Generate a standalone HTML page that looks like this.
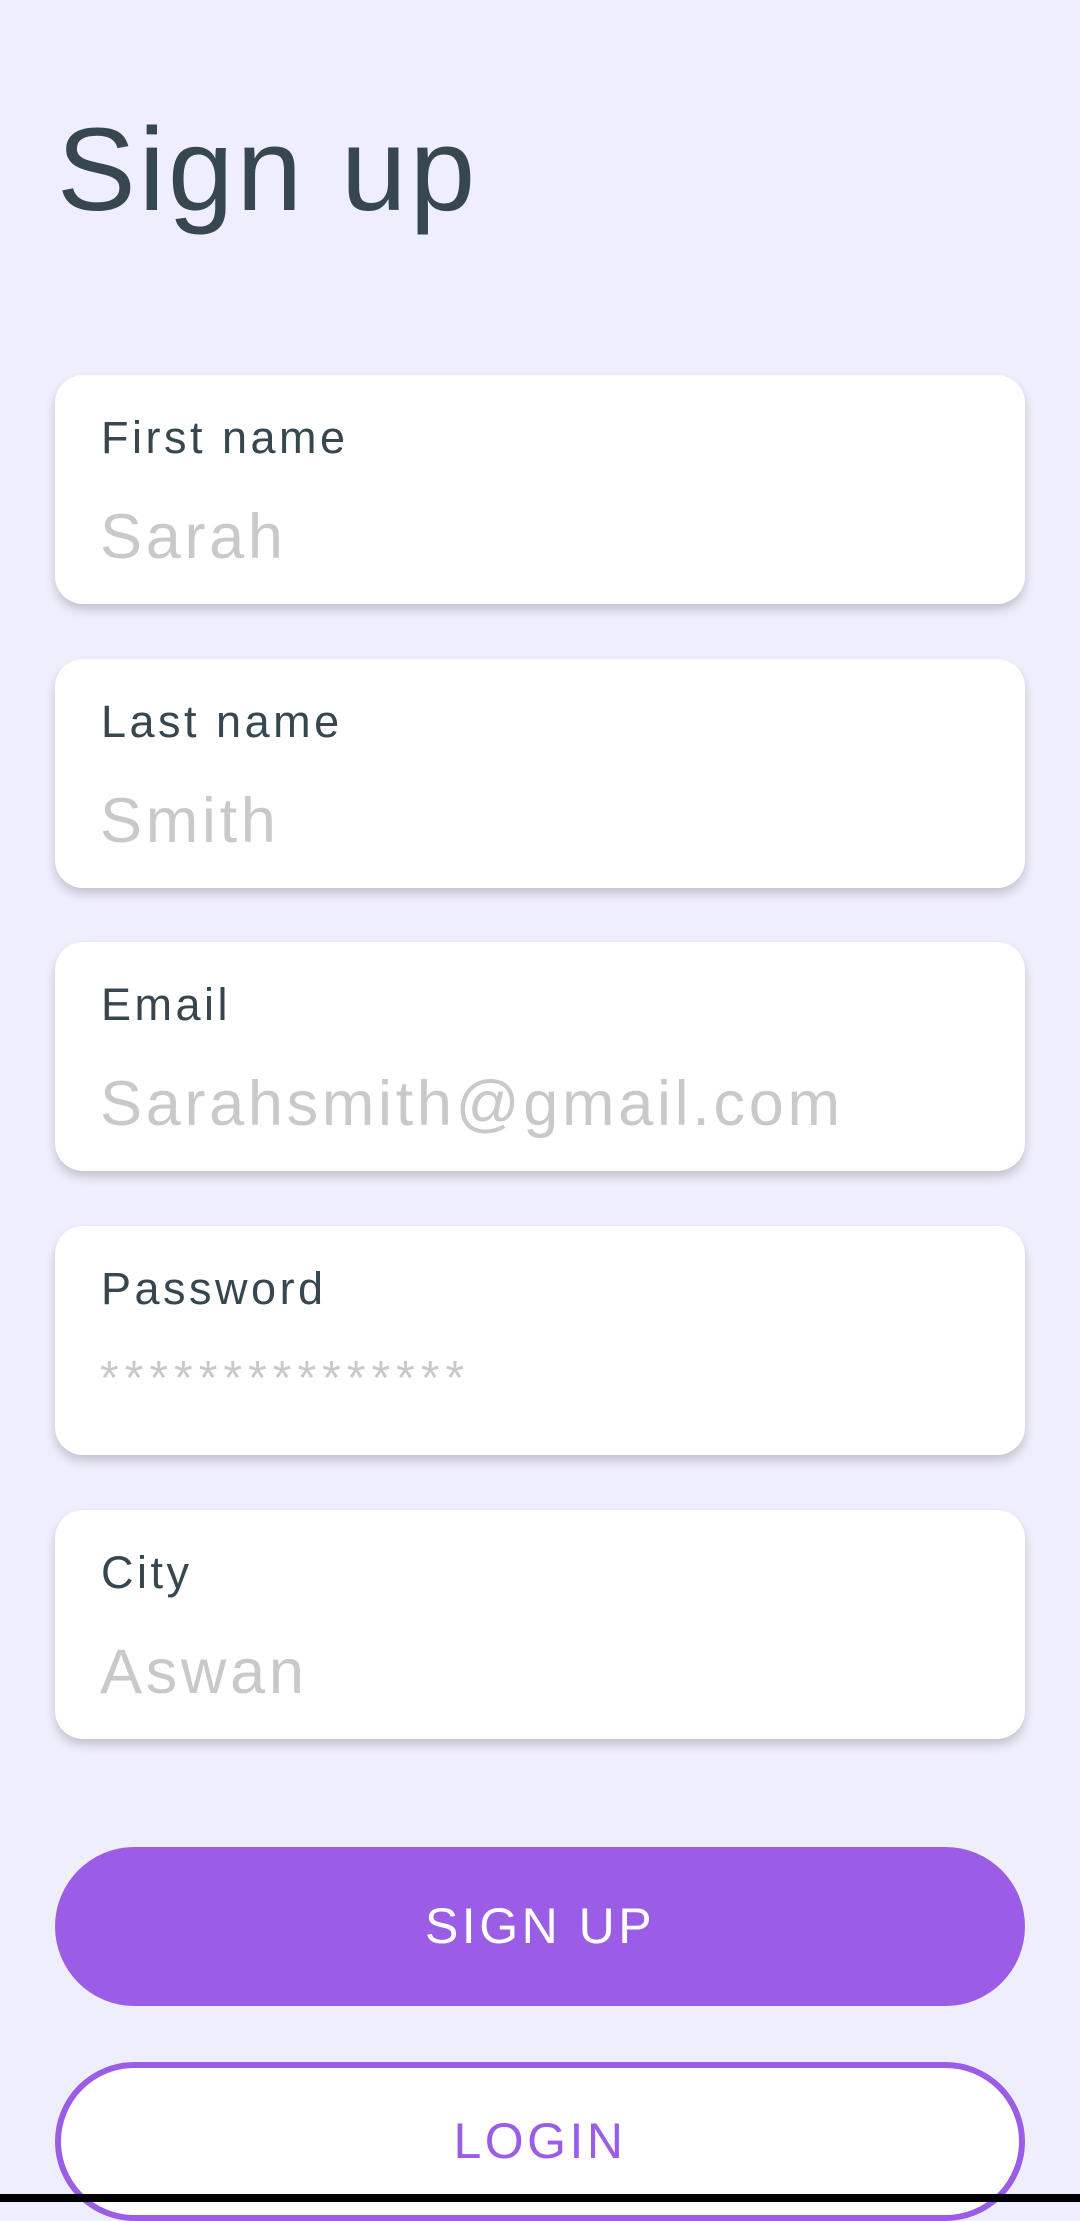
<!DOCTYPE html>
<html><head><meta charset="utf-8"><style>
body{margin:0;width:1080px;height:2202px;background:#efeefc;font-family:"Liberation Sans",sans-serif;position:relative;overflow:hidden}
h1{position:absolute;left:57px;top:100px;margin:0;font-weight:normal;font-size:118px;color:#37474f;letter-spacing:3px;line-height:140px}
.card{position:absolute;left:55px;width:970px;height:229px;background:#fff;border-radius:28px;box-shadow:0 6px 10px rgba(0,0,0,0.18)}
.lab{position:absolute;left:46px;top:37px;font-size:45px;color:#37474f;letter-spacing:3.5px}
.val{position:absolute;left:45px;top:126px;font-size:63px;color:#c9c9c9;letter-spacing:3.7px}
.btn{position:absolute;left:55px;width:970px;height:159px;border-radius:80px;text-align:center;line-height:159px;font-size:50px;letter-spacing:3.5px}
</style></head><body>
<h1>Sign up</h1>
<div class="card" style="top:375px"><div class="lab">First name</div><div class="val">Sarah</div></div>
<div class="card" style="top:659px"><div class="lab">Last name</div><div class="val">Smith</div></div>
<div class="card" style="top:942px"><div class="lab">Email</div><div class="val">Sarahsmith@gmail.com</div></div>
<div class="card" style="top:1226px"><div class="lab">Password</div><div class="val" style="font-size:48px;top:125px;letter-spacing:6px">***************</div></div>
<div class="card" style="top:1510px"><div class="lab">City</div><div class="val">Aswan</div></div>
<div class="btn" style="top:1847px;background:#9b5de5;color:#fff">SIGN UP</div>
<div class="btn" style="top:2062px;background:#fff;border:6px solid #9b5de5;box-sizing:border-box;width:970px;color:#9b5de5;line-height:147px">LOGIN</div>
<div style="position:absolute;left:0;top:2194px;width:1080px;height:8px;background:#000"></div>
</body></html>
